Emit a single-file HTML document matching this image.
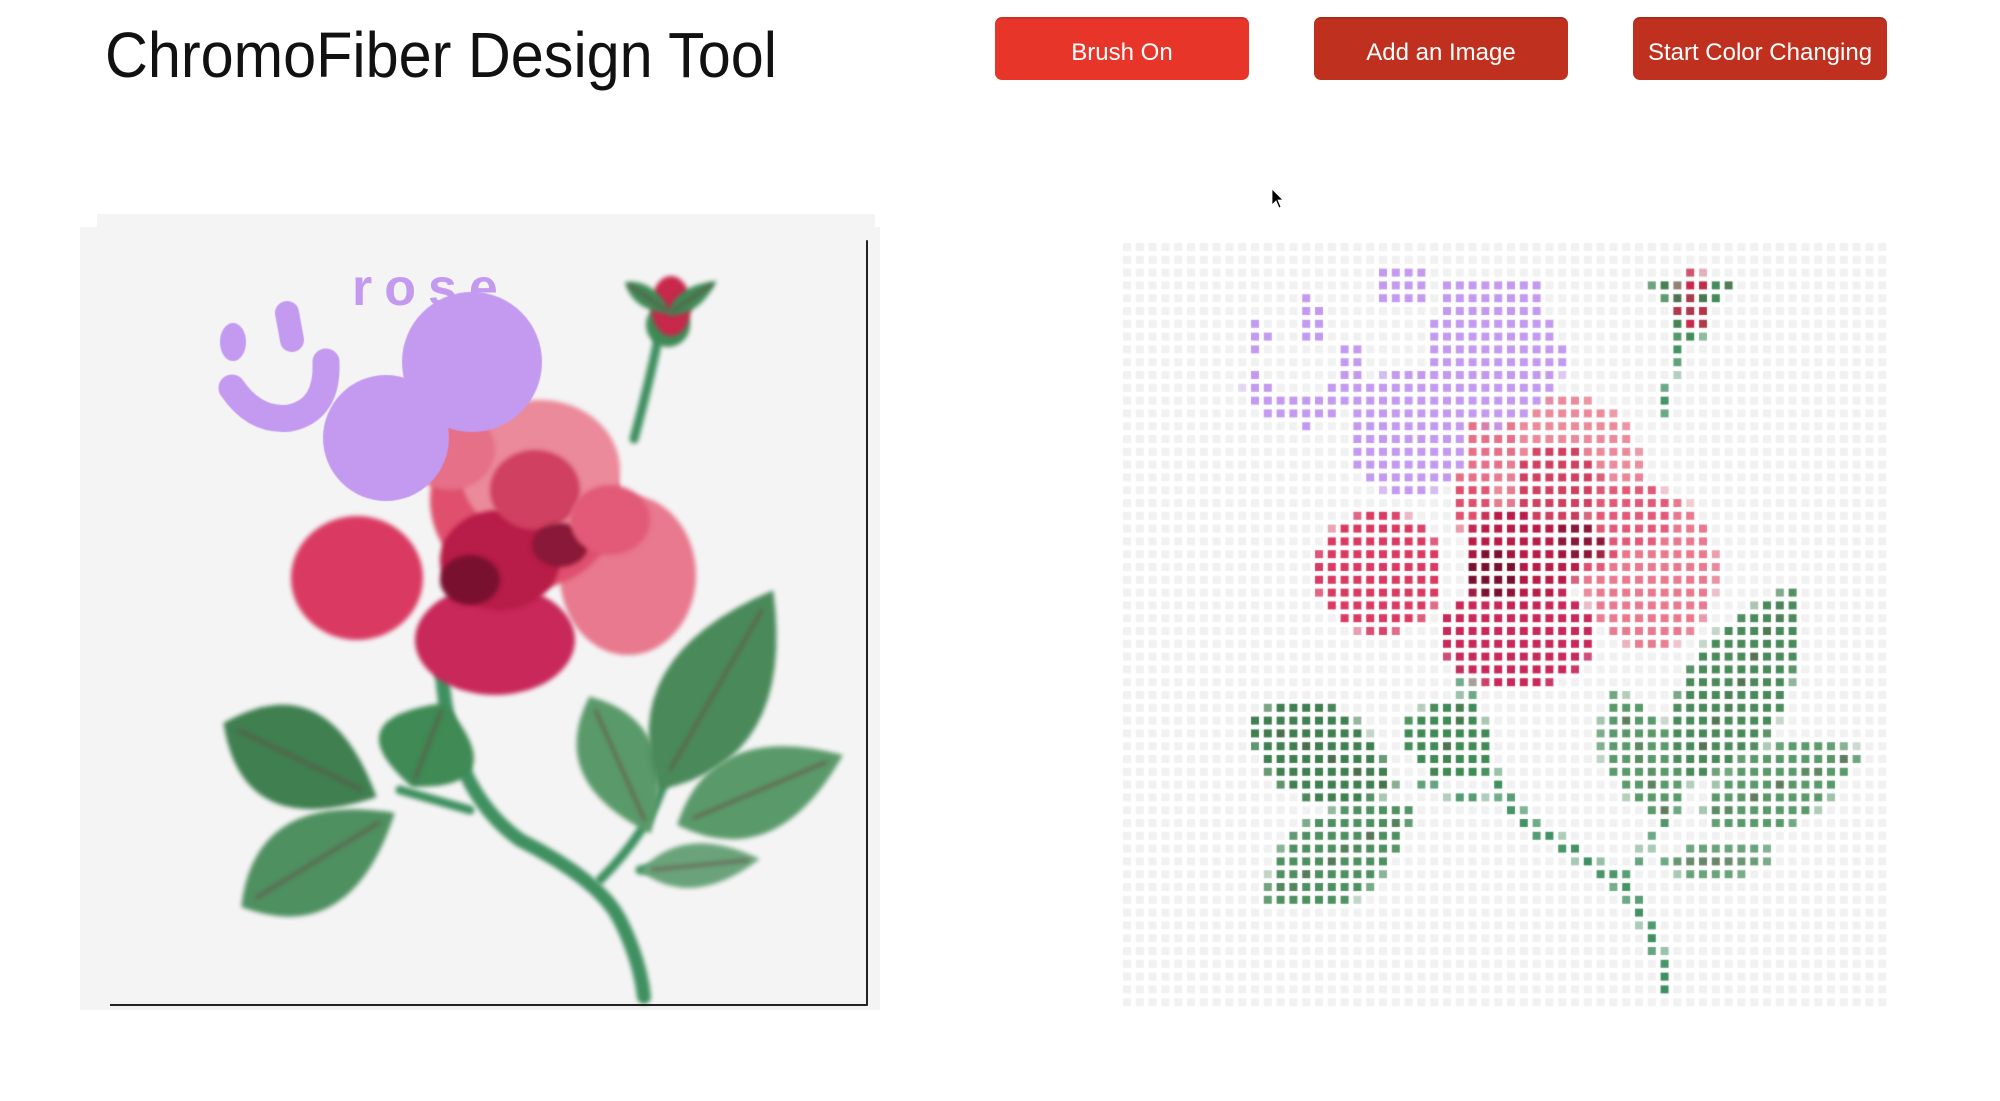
<!DOCTYPE html>
<html><head><meta charset="utf-8">
<style>
html,body{margin:0;padding:0;background:#fff;width:2000px;height:1101px;overflow:hidden;position:relative;font-family:"Liberation Sans",sans-serif}
.btn{position:absolute;top:17px;width:254px;height:63px;border-radius:7px;color:#fff;font-size:24px;display:flex;align-items:center;justify-content:center;padding-top:6px;border-top:2px solid rgba(0,0,0,0.12);box-sizing:border-box}
.g{position:absolute;background:#f4f4f4}
</style></head><body>
<svg style="position:absolute;left:0;top:0" width="900" height="110"><text x="105" y="77" font-family="Liberation Sans, sans-serif" font-size="64" textLength="672" lengthAdjust="spacingAndGlyphs" fill="#111">ChromoFiber Design Tool</text></svg>
<div class="btn" style="left:995px;background:#e8352a">Brush On</div>
<div class="btn" style="left:1314px;background:#c0301f">Add an Image</div>
<div class="btn" style="left:1633px;background:#c0301f">Start Color Changing</div>
<svg style="position:absolute;left:1271px;top:188px" width="14" height="22"><path d="M1 1 L1 17 L5 13 L8 20 L10 19 L7 12 L12 12 Z" fill="#000" stroke="#fff" stroke-width="0.8"/></svg>
<div class="g" style="left:97px;top:214px;width:778px;height:16px"></div>
<div class="g" style="left:80px;top:227px;width:800px;height:783px"></div>
<canvas id="c" width="808" height="815" style="position:absolute;left:80px;top:214px"></canvas>
<div style="position:absolute;left:110px;top:1004px;width:757px;height:2px;background:#222"></div>
<div style="position:absolute;left:866px;top:240px;width:2px;height:766px;background:#222;border-radius:2px"></div>
<div style="position:absolute;left:352px;top:258px;font-family:'Liberation Sans',sans-serif;font-weight:bold;font-size:52px;color:#c39af0;letter-spacing:12px">rose</div>
<canvas id="c2" width="808" height="815" style="position:absolute;left:80px;top:214px"></canvas>
<canvas id="d" width="780" height="775" style="position:absolute;left:1118px;top:238px"></canvas>
<script>
var c=document.getElementById('c'),x=c.getContext('2d');
x.translate(-80,-214);
function ell(cx,cy,rx,ry,col,rot){x.fillStyle=col;x.beginPath();x.ellipse(cx,cy,rx,ry,rot||0,0,Math.PI*2);x.fill();}
function leaf(cx,cy,len,wid,ang,col){x.save();x.translate(cx,cy);x.rotate(ang);x.fillStyle=col;x.beginPath();x.moveTo(-len,0);x.quadraticCurveTo(-len*0.2,-wid*2.2,len,0);x.quadraticCurveTo(-len*0.2,wid*2.2,-len,0);x.fill();x.strokeStyle='#6a4a45';x.lineWidth=2;x.beginPath();x.moveTo(-len*0.8,0);x.lineTo(len*0.8,0);x.stroke();x.restore();}
try{x.filter='blur(2px)';}catch(e){}
x.strokeStyle='#3f9060';x.lineCap='round';x.lineWidth=14;
x.beginPath();x.moveTo(442,673);x.quadraticCurveTo(450,790,520,840);x.quadraticCurveTo(600,880,620,920);x.quadraticCurveTo(640,960,644,997);x.stroke();
x.lineWidth=9;x.beginPath();x.moveTo(600,880);x.quadraticCurveTo(650,830,665,780);x.stroke();
x.beginPath();x.moveTo(634,439);x.quadraticCurveTo(650,380,660,330);x.stroke();
x.beginPath();x.moveTo(400,790);x.lineTo(470,810);x.stroke();
x.beginPath();x.moveTo(640,870);x.lineTo(720,860);x.stroke();
leaf(300,760,85,45,0.45,'#3f7f50');
leaf(318,860,90,42,-0.55,'#4e9060');
leaf(428,745,45,45,-1.2,'#3f8a55');
leaf(620,765,75,34,1.15,'#5a9a6a');
leaf(716,690,115,48,-1.05,'#4a8a5a');
leaf(760,790,90,38,-0.4,'#5a9a6a');
leaf(700,865,60,20,-0.1,'#6aa37a');
ell(668,325,22,22,'#3f8a55');ell(671,306,20,30,'#c8284a');leaf(692,298,30,9,-0.6,'#3f8a55');leaf(648,298,28,9,0.6,'#3f8a55');
ell(357,578,66,62,'#da3a62');
ell(628,575,68,80,'#e8798e');
ell(495,640,80,55,'#c8285a');
ell(525,500,95,90,'#e0506e');
ell(540,470,80,70,'#eb8a9a');
ell(500,560,60,50,'#b81c48');
ell(535,490,45,40,'#d04060');
ell(470,580,30,25,'#7a1030');
ell(560,545,28,22,'#8a1838');
ell(610,520,40,35,'#e25a78');
ell(450,450,45,40,'#e57088');
try{x.filter='none';}catch(e){}
var p='#c39af0';
ell(233,342,13,19,p);x.strokeStyle=p;x.lineCap='round';
x.lineWidth=24;x.beginPath();x.moveTo(287,313);x.lineTo(292,340);x.stroke();
x.lineWidth=27;x.beginPath();x.moveTo(232,388);x.quadraticCurveTo(255,422,290,418);x.quadraticCurveTo(328,410,326,362);x.stroke();
x.fillStyle=p;x.fillRect(360,278,40,30);x.fillRect(420,285,100,28);
var c2=document.getElementById('c2').getContext('2d');c2.translate(-80,-214);c2.fillStyle=p;
c2.beginPath();c2.arc(472,362,70,0,7);c2.fill();c2.beginPath();c2.arc(386,438,63,0,7);c2.fill();
x.beginPath();x.fillStyle=p;x.arc(472,362,70,0,7);x.fill();x.beginPath();x.arc(386,438,63,0,7);x.fill();
var d=document.getElementById('d'),y=d.getContext('2d');
var im=x.getImageData(0,0,808,815).data;
for(var j=0;j<60;j++)for(var i=0;i<60;i++){
 var gx=1123+i*12.8,gy=243+j*12.8;
 var sx=Math.round(gx+4-1023-80),sy=Math.round(gy+4+5-214);
 var col='#f1f1f1';
 if(sx>=0&&sx<808&&sy>=0&&sy<815){var k=(sy*808+sx)*4;var a=im[k+3]/255;
  if(a>0.25){var r=Math.round(im[k]*a+241*(1-a)),g=Math.round(im[k+1]*a+241*(1-a)),b=Math.round(im[k+2]*a+241*(1-a));col='rgb('+r+','+g+','+b+')';}}
 y.fillStyle=col;y.fillRect(gx-1118,gy-238,8,8);
}
x.clearRect(0,0,2000,2000);
x.setTransform(1,0,0,1,0,0);x.clearRect(0,0,808,815);
</script>
<script>
// redraw visible left canvas (without the helper text blocks)
(function(){var x=document.getElementById('c').getContext('2d');x.translate(-80,-214);
function ell(cx,cy,rx,ry,col,rot){x.fillStyle=col;x.beginPath();x.ellipse(cx,cy,rx,ry,rot||0,0,Math.PI*2);x.fill();}
function leaf(cx,cy,len,wid,ang,col){x.save();x.translate(cx,cy);x.rotate(ang);x.fillStyle=col;x.beginPath();x.moveTo(-len,0);x.quadraticCurveTo(-len*0.2,-wid*2.2,len,0);x.quadraticCurveTo(-len*0.2,wid*2.2,-len,0);x.fill();x.strokeStyle='#6a4a45';x.lineWidth=2;x.beginPath();x.moveTo(-len*0.8,0);x.lineTo(len*0.8,0);x.stroke();x.restore();}
try{x.filter='blur(2px)';}catch(e){}
x.strokeStyle='#3f9060';x.lineCap='round';x.lineWidth=14;
x.beginPath();x.moveTo(442,673);x.quadraticCurveTo(450,790,520,840);x.quadraticCurveTo(600,880,620,920);x.quadraticCurveTo(640,960,644,997);x.stroke();
x.lineWidth=9;x.beginPath();x.moveTo(600,880);x.quadraticCurveTo(650,830,665,780);x.stroke();
x.beginPath();x.moveTo(634,439);x.quadraticCurveTo(650,380,660,330);x.stroke();
x.beginPath();x.moveTo(400,790);x.lineTo(470,810);x.stroke();
x.beginPath();x.moveTo(640,870);x.lineTo(720,860);x.stroke();
leaf(300,760,85,45,0.45,'#3f7f50');
leaf(318,860,90,42,-0.55,'#4e9060');
leaf(428,745,45,45,-1.2,'#3f8a55');
leaf(620,765,75,34,1.15,'#5a9a6a');
leaf(716,690,115,48,-1.05,'#4a8a5a');
leaf(760,790,90,38,-0.4,'#5a9a6a');
leaf(700,865,60,20,-0.1,'#6aa37a');
ell(668,325,22,22,'#3f8a55');ell(671,306,20,30,'#c8284a');leaf(692,298,30,9,-0.6,'#3f8a55');leaf(648,298,28,9,0.6,'#3f8a55');
ell(357,578,66,62,'#da3a62');ell(628,575,68,80,'#e8798e');ell(495,640,80,55,'#c8285a');ell(525,500,95,90,'#e0506e');
ell(540,470,80,70,'#eb8a9a');ell(500,560,60,50,'#b81c48');ell(535,490,45,40,'#d04060');ell(470,580,30,25,'#7a1030');
ell(560,545,28,22,'#8a1838');ell(610,520,40,35,'#e25a78');ell(450,450,45,40,'#e57088');
try{x.filter='none';}catch(e){}
var p='#c39af0';
ell(233,342,13,19,p);x.strokeStyle=p;x.lineCap='round';
x.lineWidth=24;x.beginPath();x.moveTo(287,313);x.lineTo(292,340);x.stroke();
x.lineWidth=27;x.beginPath();x.moveTo(232,388);x.quadraticCurveTo(255,422,290,418);x.quadraticCurveTo(328,410,326,362);x.stroke();
})();
</script>
</body></html>
